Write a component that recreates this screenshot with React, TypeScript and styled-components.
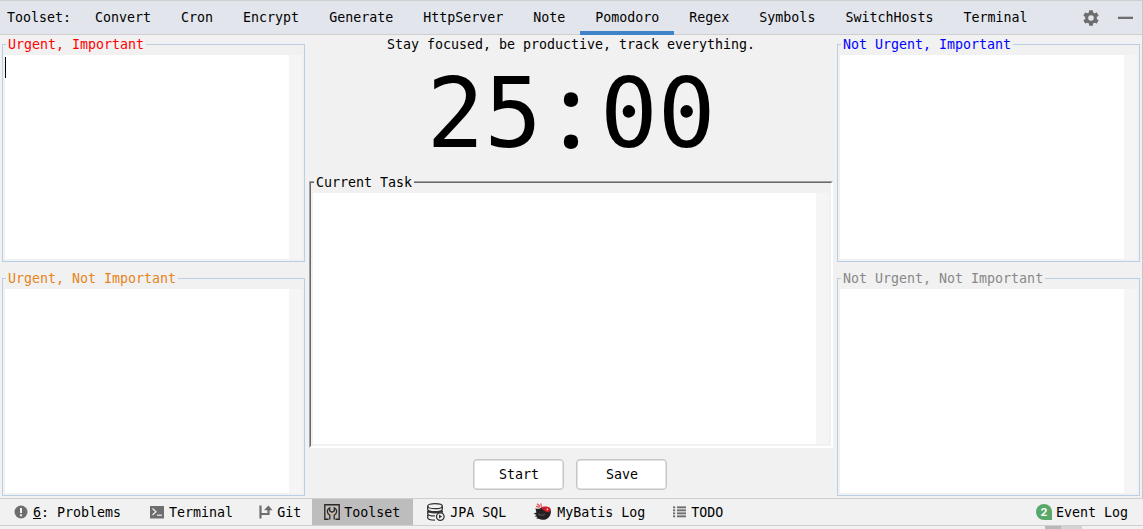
import React from "react";
import styled, { createGlobalStyle, css } from "styled-components";

const GlobalStyle = createGlobalStyle`
  * { box-sizing: border-box; }
  body {
    margin: 0;
    background: #f1f1f1;
    color: #000;
    font-family: "DejaVu Sans Mono", "Liberation Mono", monospace;
    font-size: 13.3px;
    line-height: 15px;
    overflow: hidden;
  }
`;

const Window = styled.div`
  width: 1143px;
  height: 529px;
  display: flex;
  flex-direction: column;
  background: #f1f1f1;
`;

const ToolWindow = styled.div`
  height: 498px;
  display: flex;
  flex-direction: column;
  border-right: 1px solid #c9c9c9;
`;

const TabBar = styled.div`
  height: 35px;
  flex: none;
  display: flex;
  align-items: stretch;
  padding-left: 7px;
  background: #e2e5ec;
  border-top: 1px solid #cfcfcf;
  box-shadow: inset 0 -1px 0 #cfcfcf;
`;

const TabBarTitle = styled.div`
  width: 73px;
  line-height: 33px;
`;

const Tab = styled.div<{ $active?: boolean }>`
  padding: 0 15px;
  line-height: 33px;
  white-space: nowrap;
  ${(p) => p.$active && css`box-shadow: inset 0 -4px 0 #4083c9;`}
`;

const TabActions = styled.div`
  margin-left: auto;
  display: flex;
  align-items: center;
  gap: 19px;
  padding-right: 9px;
`;

const Content = styled.div`
  flex: 1;
  display: grid;
  grid-template-columns: 303px 524px 303px;
  column-gap: 4px;
  padding: 2px 2px 2px;
`;

const Quadrants = styled.div`
  display: grid;
  grid-template-rows: 225px 225px;
  row-gap: 9px;
`;

const Group = styled.fieldset`
  min-width: 0;
  margin: 0;
  display: flex;
  border: 1px solid #b8cfe5;
  padding: 3px 2px 2px;
`;

const GroupTitle = styled.legend<{ $color: string }>`
  height: 15px;
  margin-left: 1px;
  padding: 0 2px;
  color: ${(p) => p.$color};
`;

const EtchedGroup = styled.div`
  position: relative;
  height: 267px;
  flex: none;
  display: flex;
  border: 1px solid;
  border-color: #a0a0a0 #fff #fff #a0a0a0;
`;

const EtchedInner = styled.div`
  flex: 1;
  display: flex;
  border: 1px solid;
  border-color: #696969 #fff #fff #696969;
  padding: 10px 2px 2px;
`;

const EtchedTitle = styled.div`
  position: absolute;
  top: -7px;
  left: 4px;
  padding: 0 2px;
  background: #f1f1f1;
`;

const Editor = styled.div`
  width: 100%;
  background: #fff;
  border-right: 13px solid #f5f5f5;
  padding-top: 2px;
`;

const Caret = styled.div`
  width: 1px;
  height: 21px;
  background: #000;
`;

const Center = styled.div`
  display: flex;
  flex-direction: column;
`;

const Motto = styled.div`
  text-align: center;
  height: 15px;
`;

const Timer = styled.div`
  height: 129px;
  display: flex;
  justify-content: center;
  line-height: 124px;
  font-size: 96px;
`;

const TimerColon = styled.span`
  width: 58px;
  text-align: center;
  font-family: "Open Sans", sans-serif;
  font-weight: 600;
  font-size: 100px;
  line-height: 114px;
`;

const Buttons = styled.div`
  display: flex;
  justify-content: center;
  gap: 12px;
  padding: 11px 2px 0 0;
`;

const Button = styled.button`
  width: 91px;
  height: 31px;
  padding: 0 0 0 1px;
  font: inherit;
  color: #000;
  background: #fff;
  border: 1px solid #c6c6c6;
  border-radius: 4px;
  box-shadow: inset 0 0 0 0.5px #c6c6c6;
`;

const StatusBar = styled.div`
  height: 28px;
  flex: none;
  display: flex;
  border-top: 1px solid #cfcfcf;
  border-bottom: 1px solid #cfcfcf;
`;

const StatusItem = styled.div<{ $before: number; $gap: number; $active?: boolean }>`
  display: flex;
  align-items: center;
  gap: ${(p) => p.$gap}px;
  margin-left: ${(p) => p.$before}px;
  padding: 0 ${(p) => (p.$active ? 13 : 5)}px 0 12px;
  white-space: nowrap;
  background: ${(p) => (p.$active ? "#bdbdbd" : "transparent")};

  svg { flex: none; }
`;

const EventLog = styled.div`
  margin-left: auto;
  padding-right: 15px;
  display: flex;
  align-items: center;
  gap: 4px;
`;

const EventCount = styled.span`
  width: 16px;
  height: 16px;
  border-radius: 8px 8px 0 8px;
  background: #59a869;
  color: #fff;
  font: bold 11px/16px "Inter", sans-serif;
  text-align: center;
`;

const BottomEdge = styled.div`
  flex: 1;
  display: flex;
  padding-left: 1045px;
`;

const Block = styled.div<{ $width: number; $color: string }>`
  width: ${(p) => p.$width}px;
  background: ${(p) => p.$color};
`;

const GearIcon = () => (
  <svg width="16" height="16" viewBox="0 0 16 16">
    <g fill="#6e6e6e">
      {[0, 60, 120].map((a) => (
        <rect key={a} x="6" y="0.2" width="4" height="15.6" rx="0.5" transform={`rotate(${a} 8 8)`} />
      ))}
      <circle cx="8" cy="8" r="5.9" />
    </g>
    <circle cx="8" cy="8" r="2.8" fill="#e2e5ec" />
  </svg>
);

const HideIcon = () => (
  <svg width="15" height="16" viewBox="0 0 15 16">
    <rect x="0" y="6.7" width="15" height="2.3" fill="#6e6e6e" />
  </svg>
);

const ProblemsIcon = () => (
  <svg width="14" height="14" viewBox="0 0 14 14">
    <circle cx="7" cy="7" r="6.5" fill="#6e6e6e" />
    <path d="M6 3h2v5H6zM6 9.2h2v2H6z" fill="#f1f1f1" />
  </svg>
);

const TerminalIcon = () => (
  <svg width="14" height="14" viewBox="0 0 14 14">
    <rect y="1" width="14" height="12.5" fill="#6e6e6e" />
    <path d="M2.5 3.5 6 6.8 2.5 10" fill="none" stroke="#f1f1f1" strokeWidth="1.2" />
    <path d="M7 10.2h5" stroke="#f1f1f1" strokeWidth="1.2" />
  </svg>
);

const GitIcon = () => (
  <svg width="14" height="16" viewBox="0 0 14 16">
    <path d="M1.5 1.5v13M1.5 10h8V5" fill="none" stroke="#6e6e6e" strokeWidth="2.2" />
    <path d="M5 6.2 9.4 1.5l4.2 4.7z" fill="#6e6e6e" />
  </svg>
);

const ToolsetIcon = () => (
  <svg width="16" height="16" viewBox="0 0 16 16" fill="none">
    <path d="M4.6 15.2H.8V.8h14.4v14.4h-3.8" stroke="#2d2926" strokeWidth="1.4" />
    <path
      d="M5.8 15.6v-4.4C4 10.2 3.2 8.6 3.4 7c.2-1.5 1-2.6 2.3-3.2v3L8 8.2l2.3-1.4v-3c1.3.6 2.1 1.7 2.3 3.2.2 1.6-.6 3.2-2.4 4.2v4.4"
      stroke="#2d2926"
      strokeWidth="1.3"
    />
    <path d="M6.6 9.6h2.8v1.4H6.6z" fill="#e5a85a" />
  </svg>
);

const DatabaseIcon = () => (
  <svg width="19" height="18" viewBox="0 0 19 18" fill="none" stroke="#333" strokeWidth="1.3">
    <ellipse cx="9" cy="3.2" rx="7.3" ry="2.5" />
    <path d="M1.7 3.2v3c0 3.2 14.6 3.2 14.6 0v-3M1.7 7.8v2.6c0 1.5 3.3 2.5 7.2 2.5M16.3 7.8v2M1.7 7.6c.6 3 14 3 14.6 0M1.7 12v2.7c0 1.4 3 2.4 7.3 2.4" />
    <circle cx="14.3" cy="13.6" r="3.8" fill="#f1f1f1" />
    <path d="M13 11.6v4l3.1-2z" fill="#333" stroke="none" />
  </svg>
);

const MyBatisIcon = () => (
  <svg width="19" height="18" viewBox="0 0 19 18">
    <path
      d="M2.4 5.2c2 .8 3.2.9 4.6.2C9.5 3.6 15 3.2 17.2 6c1.5 2.2.5 6.8-2.1 9-2.5 2.2-6.7 2.4-9.5.8l-2.3-.4 1-1.4-2.7-.8 2-1.2L.6 10.6l2.8-1z"
      fill="#241f20"
    />
    <path d="M7.4 4.6c3-1.8 8.2-1.6 10.2.8-.2 2.6-1.6 4.2-3.4 3.8-2-.4-3.8-2.6-6.8-4.6z" fill="#cf2027" />
    <path d="M4 .8 7 3.4M7.8.4l.6 3.4M3 3.2l3.6 1.2" stroke="#e04a4e" strokeWidth="1.2" />
    <path d="M5 10.6c2 2 5 2 7 .3" stroke="#4c4647" strokeWidth="1.6" fill="none" />
    <circle cx="14.4" cy="6.2" r=".8" fill="#fff" />
  </svg>
);

const TodoIcon = () => (
  <svg width="14" height="14" viewBox="0 0 14 14" fill="#6e6e6e">
    {[1, 4, 7, 10].map((y) => (
      <React.Fragment key={y}>
        <rect x="0" y={y + 0.4} width="2.2" height="1.9" />
        <rect x="4" y={y + 0.4} width="9" height="1.9" />
      </React.Fragment>
    ))}
  </svg>
);

const tabs = [
  "Convert",
  "Cron",
  "Encrypt",
  "Generate",
  "HttpServer",
  "Note",
  "Pomodoro",
  "Regex",
  "Symbols",
  "SwitchHosts",
  "Terminal",
];

const Quadrant = ({ title, color, focused }: { title: string; color: string; focused?: boolean }) => (
  <Group>
    <GroupTitle $color={color}>{title}</GroupTitle>
    <Editor>{focused && <Caret />}</Editor>
  </Group>
);

export default function App() {
  return (
    <Window>
      <GlobalStyle />
      <ToolWindow>
        <TabBar>
          <TabBarTitle>Toolset:</TabBarTitle>
          {tabs.map((name) => (
            <Tab key={name} $active={name === "Pomodoro"}>
              {name}
            </Tab>
          ))}
          <TabActions>
            <GearIcon />
            <HideIcon />
          </TabActions>
        </TabBar>
        <Content>
          <Quadrants>
            <Quadrant title="Urgent, Important" color="#ff0000" focused />
            <Quadrant title="Urgent, Not Important" color="#e68420" />
          </Quadrants>
          <Center>
            <Motto>Stay focused, be productive, track everything.</Motto>
            <Timer>
              <span>25</span>
              <TimerColon>:</TimerColon>
              <span>00</span>
            </Timer>
            <EtchedGroup>
              <EtchedTitle>Current Task</EtchedTitle>
              <EtchedInner>
                <Editor />
              </EtchedInner>
            </EtchedGroup>
            <Buttons>
              <Button>Start</Button>
              <Button>Save</Button>
            </Buttons>
          </Center>
          <Quadrants>
            <Quadrant title="Not Urgent, Important" color="#0000ff" />
            <Quadrant title="Not Urgent, Not Important" color="#888888" />
          </Quadrants>
        </Content>
      </ToolWindow>
      <StatusBar>
        <StatusItem $before={2} $gap={5}>
          <ProblemsIcon />
          <span>
            <u>6</u>: Problems
          </span>
        </StatusItem>
        <StatusItem $before={12} $gap={5}>
          <TerminalIcon />
          Terminal
        </StatusItem>
        <StatusItem $before={9} $gap={4}>
          <GitIcon />
          Git
        </StatusItem>
        <StatusItem $before={6} $gap={4} $active>
          <ToolsetIcon />
          Toolset
        </StatusItem>
        <StatusItem $before={1} $gap={5}>
          <DatabaseIcon />
          JPA SQL
        </StatusItem>
        <StatusItem $before={10} $gap={5}>
          <MyBatisIcon />
          MyBatis Log
        </StatusItem>
        <StatusItem $before={11} $gap={4}>
          <TodoIcon />
          TODO
        </StatusItem>
        <EventLog>
          <EventCount>2</EventCount>
          Event Log
        </EventLog>
      </StatusBar>
      <BottomEdge>
        <Block $width={16} $color="#b8b8b8" />
        <Block $width={21} $color="#d3d3d3" />
      </BottomEdge>
    </Window>
  );
}
